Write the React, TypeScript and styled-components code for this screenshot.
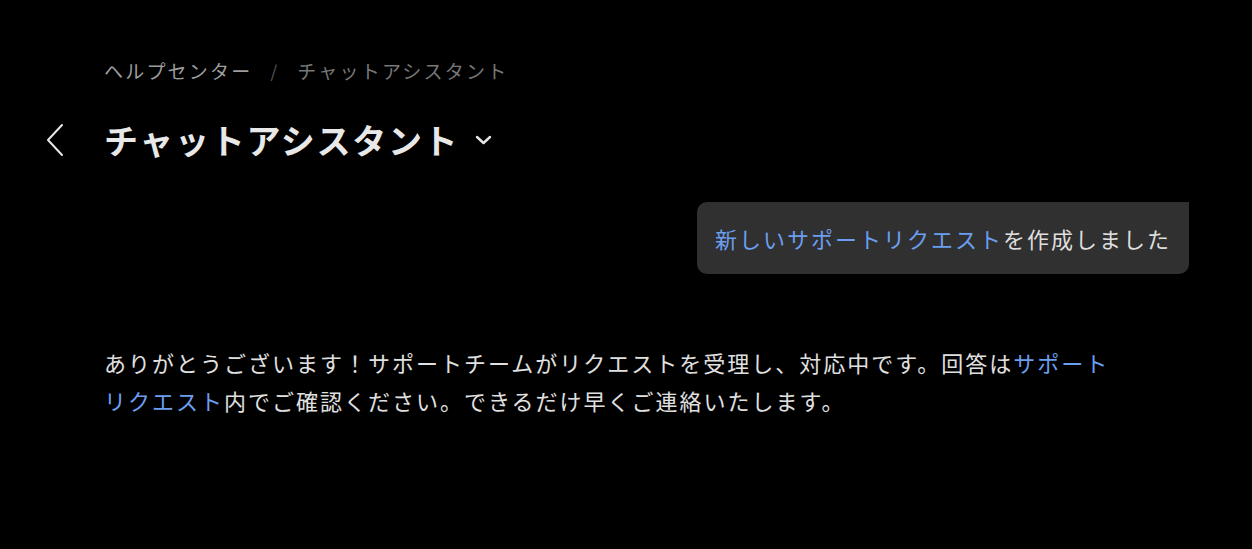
import React from "react";
import styled, { createGlobalStyle } from "styled-components";

const Global = createGlobalStyle`
  html, body { margin: 0; padding: 0; background: #000; }
  body { font-family: "Noto Sans CJK JP", "Noto Sans", sans-serif; color: #e3e3e3; }
`;

const Page = styled.div`
  width: 1252px;
  height: 549px;
  background: #000;
  box-sizing: border-box;
  padding: 56px 63px 0 40px;
  display: flex;
  flex-direction: column;
`;

const Breadcrumb = styled.nav`
  margin-left: 64px;
  display: flex;
  align-items: center;
  gap: 18px;
  font-size: 19px;
  letter-spacing: 2.2px;
  line-height: 30px;
`;

const Crumb = styled.span<{ $current?: boolean }>`
  color: ${(p) => (p.$current ? "#777777" : "#9d9d9d")};
`;

const Sep = styled.span`
  color: #5a5a5a;
  font-size: 17px;
`;

const TitleRow = styled.div`
  margin-top: 24px;
  display: flex;
  align-items: center;
  height: 60px;
`;

const BackButton = styled.button`
  width: 64px;
  height: 40px;
  padding: 0 0 0 6px;
  background: none;
  border: 0;
  display: flex;
  align-items: center;
  color: #e6e6e6;
  cursor: pointer;
`;

const Title = styled.h1`
  margin: 0;
  font-size: 34px;
  font-weight: 700;
  letter-spacing: 1.7px;
  color: #e8e8e8;
  line-height: 44px;
  display: flex;
  align-items: center;
  gap: 16px;
`;

const Chat = styled.div`
  margin-left: 64px;
  display: flex;
  flex-direction: column;
`;

const UserBubble = styled.div`
  align-self: flex-end;
  margin-top: 32px;
  background: #303030;
  border-radius: 10px 0 10px 10px;
  padding: 18px 18px;
  font-size: 22px;
  letter-spacing: 2px;
  line-height: 36px;
  color: #dedede;
`;

const Link = styled.a`
  color: #6c9ef0;
  text-decoration: none;
`;

const Answer = styled.p`
  margin: 69px 0 0 0;
  max-width: 1028px;
  font-size: 22px;
  letter-spacing: 2px;
  line-height: 38px;
  color: #e0e0e0;
`;

export default function App() {
  return (
    <>
      <Global />
      <Page>
        <Breadcrumb>
          <Crumb>ヘルプセンター</Crumb>
          <Sep>/</Sep>
          <Crumb $current>チャットアシスタント</Crumb>
        </Breadcrumb>
        <TitleRow>
          <BackButton aria-label="戻る">
            <svg width="18" height="34" viewBox="0 0 18 34" fill="none">
              <path d="M16 2 L2 17 L16 32" stroke="#e6e6e6" strokeWidth="2" strokeLinecap="round" strokeLinejoin="round" />
            </svg>
          </BackButton>
          <Title>
            チャットアシスタント
            <svg width="17" height="10" viewBox="0 0 17 10" fill="none">
              <path d="M2 2 L8.5 8 L15 2" stroke="#e6e6e6" strokeWidth="2.4" strokeLinecap="round" strokeLinejoin="round" />
            </svg>
          </Title>
        </TitleRow>
        <Chat>
          <UserBubble>
            <Link href="#">新しいサポートリクエスト</Link>を作成しました
          </UserBubble>
          <Answer>
            ありがとうございます！サポートチームがリクエストを受理し、対応中です。回答は
            <Link href="#">サポートリクエスト</Link>内でご確認ください。できるだけ早くご連絡いたします。
          </Answer>
        </Chat>
      </Page>
    </>
  );
}
